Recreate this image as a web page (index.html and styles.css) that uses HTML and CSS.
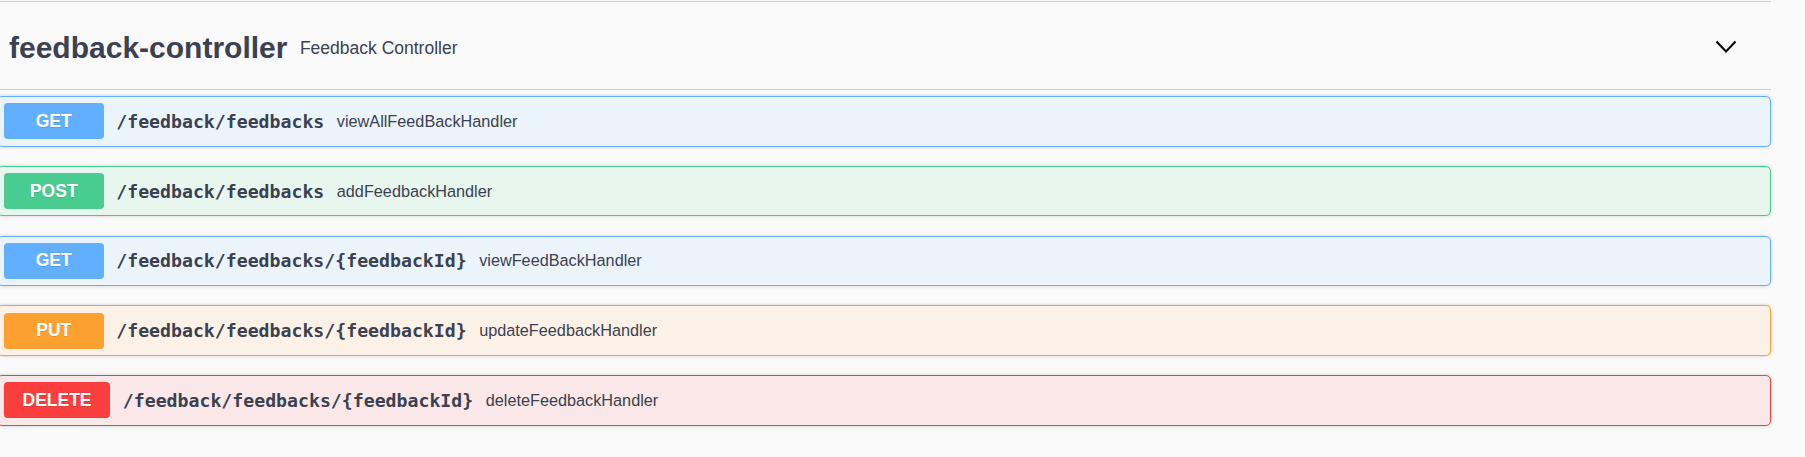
FILE: index.html
```html
<!DOCTYPE html>
<html>
<head>
<meta charset="utf-8">
<link rel="stylesheet" href="styles.css">
</head>
<body>
<div class="wrap">
  <div class="tag">
    <h3 class="tag-title">feedback-controller</h3>
    <small class="tag-desc">Feedback Controller</small>
    <span class="spacer"></span>
    <svg class="chevron" width="22" height="14" viewBox="0 0 22 14"><polyline points="1.5,1.5 11,11.5 20.5,1.5" fill="none" stroke="#000" stroke-width="2"/></svg>
  </div>
  <div class="op op-get">
    <span class="method">GET</span>
    <span class="path">/feedback/feedbacks</span>
    <span class="desc">viewAllFeedBackHandler</span>
  </div>
  <div class="op op-post">
    <span class="method">POST</span>
    <span class="path">/feedback/feedbacks</span>
    <span class="desc">addFeedbackHandler</span>
  </div>
  <div class="op op-get">
    <span class="method">GET</span>
    <span class="path">/feedback/feedbacks/{feedbackId}</span>
    <span class="desc">viewFeedBackHandler</span>
  </div>
  <div class="op op-put">
    <span class="method">PUT</span>
    <span class="path">/feedback/feedbacks/{feedbackId}</span>
    <span class="desc">updateFeedbackHandler</span>
  </div>
  <div class="op op-delete">
    <span class="method">DELETE</span>
    <span class="path">/feedback/feedbacks/{feedbackId}</span>
    <span class="desc">deleteFeedbackHandler</span>
  </div>
</div>
</body>
</html>
```
FILE: styles.css
```css
html, body {
  margin: 0;
  padding: 0;
  background: #fafafa;
  font-family: "Liberation Sans", Arial, sans-serif;
  color: #3b4151;
}

.wrap {
  margin-left: -3.5px;
  width: 1774.5px;
  padding-top: 1px;
}

.tag {
  display: flex;
  align-items: center;
  height: 82px;
  padding: 5px 25px 0 12.5px;
  border-top: 1px solid #c9cacd;
  border-bottom: 1px solid #c9cacd;
  margin-bottom: 6px;
}

.tag-title {
  margin: 0;
  font-size: 30px;
  font-weight: bold;
  line-height: normal;
  color: #3b4151;
}

.tag-desc {
  font-size: 17.5px;
  padding: 0 12.5px;
  color: #3b4151;
}

.spacer {
  flex: 1;
}

.chevron {
  display: block;
  margin-right: 9px;
  margin-bottom: 2px;
}

.op {
  display: flex;
  align-items: center;
  padding: 6.25px;
  border: 1px solid #000;
  border-radius: 5px;
  margin-bottom: 19.25px;
  box-shadow: 0 0 3.75px rgba(0, 0, 0, 0.19);
}

.method {
  min-width: 100px;
  box-sizing: border-box;
  padding: 7.5px 18.75px;
  line-height: 21px;
  font-size: 17.5px;
  font-weight: bold;
  text-align: center;
  color: #fff;
  border-radius: 3.75px;
  text-shadow: 0 1px 0 rgba(0, 0, 0, 0.1);
}

.path {
  padding: 0 12.5px;
  font-family: "DejaVu Sans Mono", "Liberation Mono", monospace;
  font-weight: bold;
  font-size: 18.2px;
  color: #3b4151;
}

.desc {
  font-size: 16.25px;
  color: #3b4151;
}

.op-get { background: #ebf3fb; border-color: #61affe; }
.op-get .method { background: #61affe; }

.op-post { background: #e8f6f0; border-color: #49cc90; }
.op-post .method { background: #49cc90; }

.op-put { background: #fbf1e6; border-color: #fca130; }
.op-put .method { background: #fca130; }

.op-delete { background: #fae7e7; border-color: #f93e3e; }
.op-delete .method { background: #f93e3e; }
```
